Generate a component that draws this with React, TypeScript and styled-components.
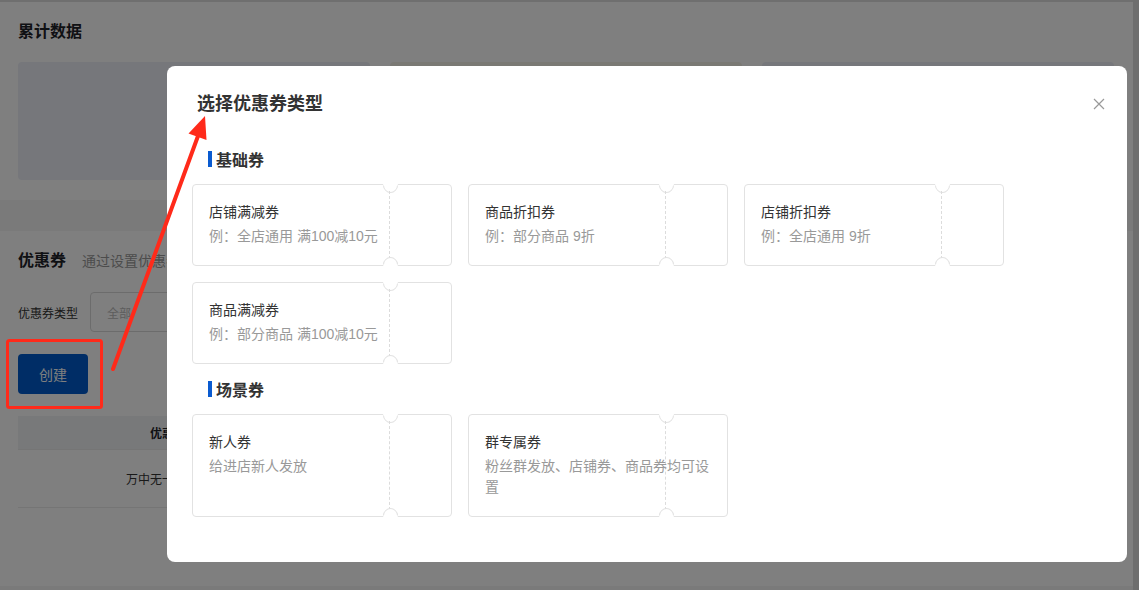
import React from 'react';
import styled, { createGlobalStyle } from 'styled-components';

const GlobalStyle = createGlobalStyle`
  html, body {
    margin: 0;
    padding: 0;
    background: #ffffff;
    font-family: "Liberation Sans", "Noto Sans CJK SC", sans-serif;
    color: #333333;
    overflow: hidden;
  }
  * {
    box-sizing: border-box;
  }
`;

const Page = styled.div`
  display: flex;
  height: 590px;
  overflow: hidden;
`;

const Main = styled.div`
  flex: 1;
  display: flex;
  flex-direction: column;
  gap: 31px;
  background: #f4f4f4;
  border-top: 2px solid #dedede;
`;

const ScrollStrip = styled.div`
  width: 6px;
  background: #dcdcdc;
`;

const Section = styled.section<{ $height?: number }>`
  background: #ffffff;
  padding: 19px 18px 20px;
  ${(p) => (p.$height ? `height: ${p.$height}px;` : '')}
`;

const SectionTitle = styled.div`
  display: flex;
  align-items: baseline;
  gap: 16px;
  font-size: 16px;
  line-height: 22px;
  font-weight: 600;
  color: #1f2329;
`;

const SubTitle = styled.span`
  font-size: 14px;
  font-weight: 400;
  color: #999999;
`;

const StatGrid = styled.div`
  display: grid;
  grid-template-columns: repeat(3, 352px);
  gap: 20px;
  margin-top: 19px;
`;

const StatBox = styled.div<{ $tone: string }>`
  height: 118px;
  border-radius: 4px;
  background: ${(p) => p.$tone};
`;

const FilterRow = styled.div`
  display: flex;
  align-items: center;
  gap: 12px;
  margin-top: 20px;
  font-size: 12px;
  color: #333333;
`;

const Select = styled.div`
  width: 220px;
  height: 40px;
  display: flex;
  align-items: center;
  padding-left: 16px;
  border: 1px solid #d9d9d9;
  border-radius: 4px;
  color: #bbbbbb;
  font-size: 12px;
`;

const PrimaryButton = styled.button`
  display: block;
  width: 70px;
  height: 40px;
  margin-top: 22px;
  border: none;
  border-radius: 4px;
  background: #005bcc;
  color: #ffffff;
  font-family: inherit;
  font-size: 14px;
`;

const Table = styled.div`
  margin-top: 22px;
  font-size: 12px;
`;

const TableRow = styled.div<{ $head?: boolean }>`
  display: grid;
  grid-template-columns: 324px 1fr;
  align-items: center;
  height: ${(p) => (p.$head ? 34 : 58)}px;
  background: ${(p) => (p.$head ? '#f0f2f5' : '#ffffff')};
  font-weight: ${(p) => (p.$head ? 600 : 400)};
  color: ${(p) => (p.$head ? '#1f2329' : '#333333')};
  border-bottom: 1px solid #ebebeb;
`;

const Cell = styled.div`
  text-align: center;
`;

const Overlay = styled.div`
  position: fixed;
  inset: 0;
  background: rgba(0, 0, 0, 0.5);
`;

const Modal = styled.div`
  position: absolute;
  left: 167px;
  top: 66px;
  width: 960px;
  height: 496px;
  background: #ffffff;
  border-radius: 8px;
  padding: 26px 24px 0 25px;
`;

const ModalTitle = styled.h2`
  margin: 0 0 0 5px;
  font-size: 18px;
  line-height: 24px;
  font-weight: 700;
  color: #333333;
`;

const CloseButton = styled.button`
  position: absolute;
  top: 32px;
  right: 22px;
  width: 12px;
  height: 12px;
  padding: 0;
  border: none;
  background: none;
  display: flex;
`;

const Group = styled.div`
  margin-top: 14px;
  &:first-of-type {
    margin-top: 32px;
  }
`;

const GroupHead = styled.div`
  display: flex;
  align-items: center;
  gap: 4px;
  padding-left: 16px;
  margin-bottom: 14px;
  height: 22px;
  font-size: 16px;
  font-weight: 600;
  color: #333333;
  &::before {
    content: '';
    width: 4px;
    height: 16px;
    background: #0a5bd0;
  }
`;

const CardGrid = styled.div`
  display: grid;
  grid-template-columns: repeat(3, 260px);
  gap: 16px;
`;

const Ticket = styled.div`
  position: relative;
  border: 1px solid #e2e2e2;
  border-radius: 4px;
  padding: 16px 16px 18px;
  background: #ffffff;
  &::before,
  &::after {
    content: '';
    position: absolute;
    left: 190px;
    width: 13px;
    height: 13px;
    border: 1px solid transparent;
    border-radius: 50%;
    background: #ffffff;
    transform: rotate(-45deg);
  }
  &::before {
    top: -7px;
    border-left-color: #e2e2e2;
    border-bottom-color: #e2e2e2;
  }
  &::after {
    bottom: -7px;
    border-top-color: #e2e2e2;
    border-right-color: #e2e2e2;
  }
`;

const Perforation = styled.div`
  position: absolute;
  left: 196px;
  top: 6px;
  bottom: 6px;
  border-left: 1px dashed #dcdcdc;
`;

const TicketTitle = styled.div`
  position: relative;
  font-size: 14px;
  line-height: 22px;
  color: #333333;
`;

const TicketDesc = styled.div`
  position: relative;
  margin-top: 3px;
  font-size: 14px;
  line-height: 21px;
  color: #999999;
`;

const Annotation = styled.svg`
  position: fixed;
  left: 0;
  top: 0;
  pointer-events: none;
`;

type Coupon = { title: string; desc: string };

const groups: { name: string; items: Coupon[] }[] = [
  {
    name: '基础券',
    items: [
      { title: '店铺满减券', desc: '例：全店通用 满100减10元' },
      { title: '商品折扣券', desc: '例：部分商品 9折' },
      { title: '店铺折扣券', desc: '例：全店通用 9折' },
      { title: '商品满减券', desc: '例：部分商品 满100减10元' },
    ],
  },
  {
    name: '场景券',
    items: [
      { title: '新人券', desc: '给进店新人发放' },
      { title: '群专属券', desc: '粉丝群发放、店铺券、商品券均可设置' },
    ],
  },
];

const App: React.FC = () => {
  return (
    <>
      <GlobalStyle />
      <Page>
        <Main>
          <Section>
            <SectionTitle>累计数据</SectionTitle>
            <StatGrid>
              <StatBox $tone="#eceef7" />
              <StatBox $tone="#f4f2e9" />
              <StatBox $tone="#eceef7" />
            </StatGrid>
          </Section>
          <Section $height={355}>
            <SectionTitle>
              优惠券
              <SubTitle>通过设置优惠券，吸引用户下单</SubTitle>
            </SectionTitle>
            <FilterRow>
              优惠券类型
              <Select>全部</Select>
            </FilterRow>
            <PrimaryButton>创建</PrimaryButton>
            <Table>
              <TableRow $head>
                <Cell>优惠券名称</Cell>
                <Cell>类型</Cell>
              </TableRow>
              <TableRow>
                <Cell>万中无一优惠券活动</Cell>
                <Cell>店铺满减券</Cell>
              </TableRow>
            </Table>
          </Section>
        </Main>
        <ScrollStrip />
      </Page>

      <Overlay>
        <Modal>
          <ModalTitle>选择优惠券类型</ModalTitle>
          <CloseButton aria-label="关闭">
            <svg width="12" height="12" viewBox="0 0 12 12">
              <path d="M1 1 L11 11 M11 1 L1 11" stroke="#999" strokeWidth="1.2" fill="none" />
            </svg>
          </CloseButton>
          {groups.map((g) => (
            <Group key={g.name}>
              <GroupHead>{g.name}</GroupHead>
              <CardGrid>
                {g.items.map((c) => (
                  <Ticket key={c.title}>
                    <Perforation />
                    <TicketTitle>{c.title}</TicketTitle>
                    <TicketDesc>{c.desc}</TicketDesc>
                  </Ticket>
                ))}
              </CardGrid>
            </Group>
          ))}
        </Modal>
      </Overlay>

      <Annotation width="1139" height="590" viewBox="0 0 1139 590">
        <rect x="7.5" y="340.5" width="94" height="67" rx="2" fill="none" stroke="#ff2a1a" strokeWidth="3" />
        <line x1="113" y1="369" x2="198" y2="136" stroke="#ff2a1a" strokeWidth="4" strokeLinecap="round" />
        <polygon points="205,116 206.5,140 188.5,133.5" fill="#ff2a1a" />
      </Annotation>
    </>
  );
};

export default App;
